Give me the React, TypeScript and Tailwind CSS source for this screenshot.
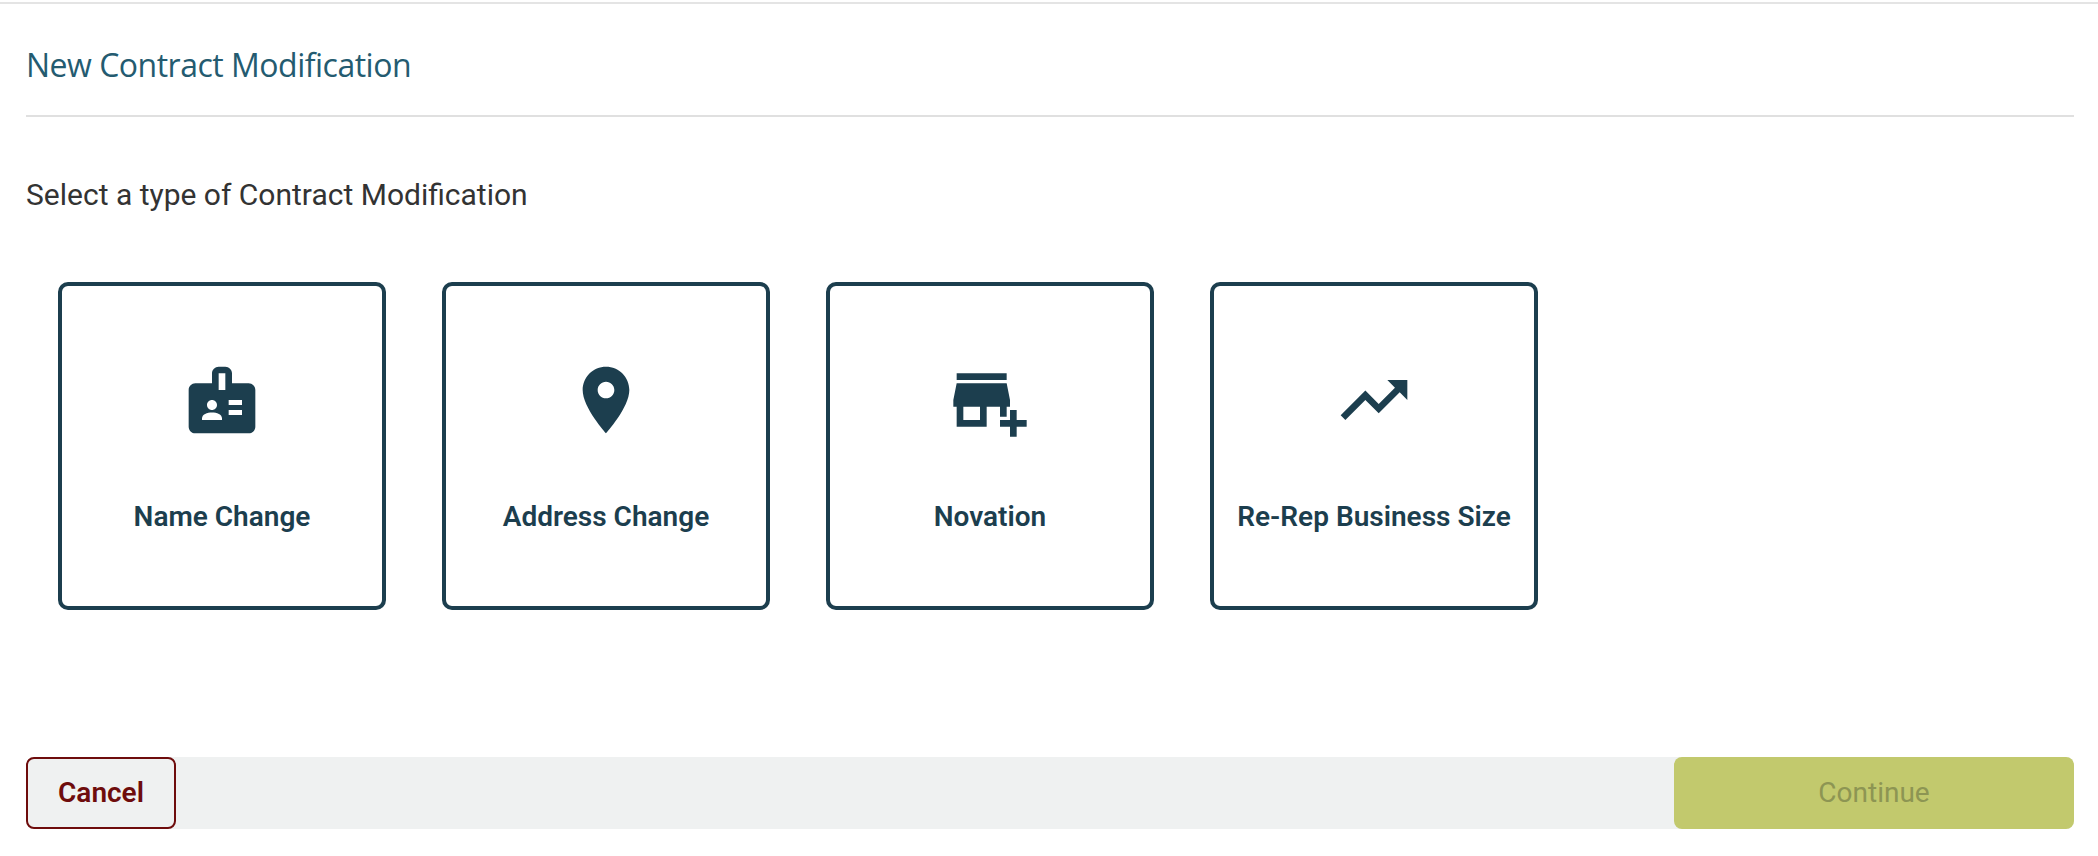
const modificationTypes = [
  {
    label: "Name Change",
    path: "M20 7h-5V4c0-1.1-.9-2-2-2h-2c-1.1 0-2 .9-2 2v3H4c-1.1 0-2 .9-2 2v11c0 1.1.9 2 2 2h16c1.1 0 2-.9 2-2V9c0-1.1-.9-2-2-2zM9 12c.83 0 1.5.67 1.5 1.5S9.83 15 9 15s-1.5-.67-1.5-1.5S8.17 12 9 12zm3 6H6v-.43c0-.6.36-1.15.92-1.39C7.56 15.9 8.26 15.75 9 15.75s1.44.15 2.08.43c.55.24.92.78.92 1.39V18zm1-9h-2V4h2v5zm5 7.5h-4V15h4v1.5zm0-3h-4V12h4v1.5z",
  },
  {
    label: "Address Change",
    path: "M12 2C8.13 2 5 5.13 5 9c0 5.25 7 13 7 13s7-7.75 7-13c0-3.87-3.13-7-7-7zm0 9.5c-1.38 0-2.5-1.12-2.5-2.5s1.12-2.5 2.5-2.5 2.5 1.12 2.5 2.5-1.12 2.5-2.5 2.5z",
  },
  {
    label: "Novation",
    path: "M15 17h2v-3h1v-2l-1-5H2l-1 5v2h1v6h9v-6h4v3zM9 18H4v-4h5v4zM17 4H2v2h15V4zM20 18v-3h-2v3h-3v2h3v3h2v-3h3v-2h-3z",
  },
  {
    label: "Re-Rep Business Size",
    path: "M16 6l2.29 2.29-4.88 4.88-4-4L2 16.59 3.41 18l6-6 4 4 6.3-6.29L22 12V6z",
  },
];

export default function App() {
  return (
    <div className="min-h-[856px] bg-white pt-[2px] font-['Roboto',sans-serif]">
      <div className="border-t-2 border-[#e4e4e4] pl-[26px] pr-[24px]">
        <div className="border-b-2 border-[#e0e0e0] h-[113px] flex items-center pt-[11px]">
          <h1 className="font-['Open_Sans',sans-serif] text-[32px] leading-[40px] tracking-[-0.5px] font-normal text-[#245b70]">
            New Contract Modification
          </h1>
        </div>

        <p className="mt-[60px] text-[30px] leading-[36px] text-[#333333]">
          Select a type of Contract Modification
        </p>

        <div className="mt-[69px] ml-[32px] flex gap-[56px]">
          {modificationTypes.map((type) => (
            <button
              key={type.label}
              type="button"
              className="w-[328px] h-[328px] flex flex-col items-center justify-center gap-[61px] rounded-[10px] border-4 border-[#1c3e4e] bg-white text-[#1c3e4e]"
            >
              <svg viewBox="0 0 24 24" className="w-[80px] h-[80px]" fill="currentColor">
                <path d={type.path} />
              </svg>
              <span className="text-[28px] leading-[32px] font-semibold whitespace-nowrap">
                {type.label}
              </span>
            </button>
          ))}
        </div>

        <div className="mt-[147px] h-[72px] flex justify-between rounded-[8px] bg-[#eff1f1]">
          <button
            type="button"
            className="w-[150px] rounded-[8px] border-2 border-[#6e0c0c] text-[28px] font-semibold text-[#6e0c0c]"
          >
            Cancel
          </button>
          <button
            type="button"
            className="w-[400px] rounded-[8px] bg-[#c2c96d] text-[28px] text-[#8d9553]"
          >
            Continue
          </button>
        </div>
      </div>
    </div>
  );
}
